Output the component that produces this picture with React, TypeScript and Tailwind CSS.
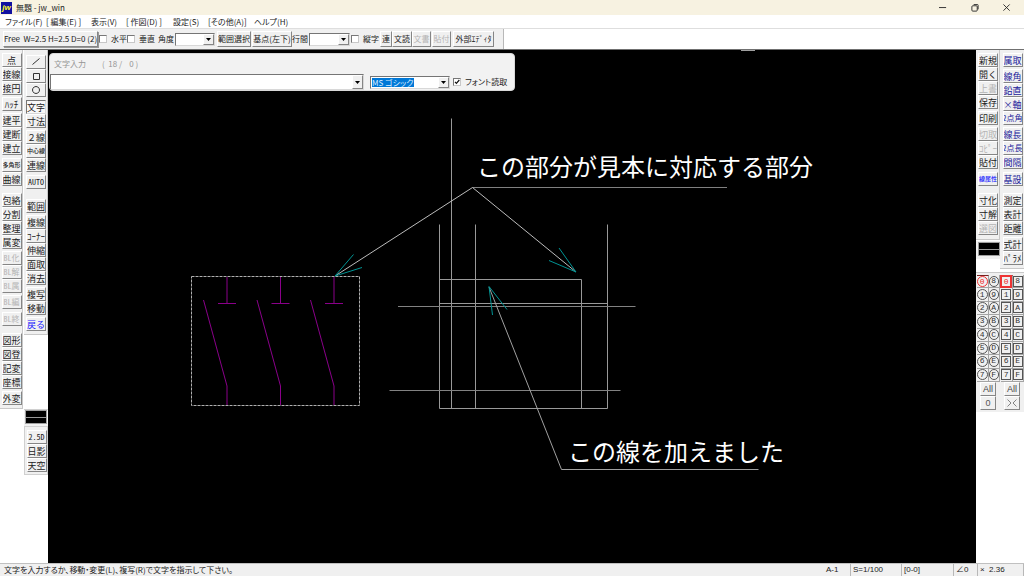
import React from "react";

type Tool = { t: string; gap?: string; tone?: "off" | "blue" | "navy"; pressed?: boolean; small?: boolean; latin?: boolean; shape?: string };

const colA: Tool[] = [
  { t: "点" }, { t: "接線" }, { t: "接円" },
  { t: "ﾊｯﾁ", gap: "mt-[2px]" },
  { t: "建平", gap: "mt-[2px]" }, { t: "建断" }, { t: "建立" },
  { t: "多角形", gap: "mt-[3px]", small: true }, { t: "曲線" },
  { t: "包絡", gap: "mt-[7px]" }, { t: "分割" }, { t: "整理" }, { t: "属変" },
  { t: "BL化", gap: "mt-[2px]", tone: "off", latin: true }, { t: "BL解", tone: "off", latin: true }, { t: "BL属", tone: "off", latin: true },
  { t: "BL編", gap: "mt-[2px]", tone: "off", latin: true },
  { t: "BL終", gap: "mt-[3px]", tone: "off", latin: true },
  { t: "図形", gap: "mt-[7px]" }, { t: "図登" }, { t: "記変" }, { t: "座標" },
  { t: "外変", gap: "mt-[2px]" },
];
const colB: Tool[] = [
  { t: "線", shape: "M1.5 7.5 8.5 1.5" }, { t: "矩形", shape: "M2.5 2.5h6v6h-6z" }, { t: "円", shape: "M5 1.5a3.5 3.5 0 1 0 .01 0z" },
  { t: "文字", gap: "mt-[3px]", pressed: true }, { t: "寸法" },
  { t: "２線", gap: "mt-[2px]" }, { t: "中心線", small: true }, { t: "連線" },
  { t: "AUTO", gap: "mt-[3px]", latin: true },
  { t: "範囲", gap: "mt-[10px]" },
  { t: "複線", gap: "mt-[2px]" }, { t: "ｺｰﾅｰ" }, { t: "伸縮" }, { t: "面取" }, { t: "消去" },
  { t: "複写", gap: "mt-[2px]" }, { t: "移動" },
  { t: "戻る", gap: "mt-[2px]", tone: "blue" },
];
const colB2: Tool[] = [{ t: "2.5D", latin: true }, { t: "日影" }, { t: "天空" }];
const colC: Tool[] = [
  { t: "新規" }, { t: "開く" }, { t: "上書", tone: "off" }, { t: "保存" },
  { t: "印刷", gap: "mt-[2px]" },
  { t: "切取", gap: "mt-[2px]", tone: "off" }, { t: "ｺﾋﾟｰ", tone: "off" }, { t: "貼付" },
  { t: "線属性", gap: "mt-[3px]", tone: "blue", small: true },
  { t: "寸化", gap: "mt-[7px]" }, { t: "寸解" }, { t: "選図", tone: "off" },
];
const colD: Tool[] = [
  { t: "属取", tone: "navy" },
  { t: "線角", gap: "mt-[2px]", tone: "navy" }, { t: "鉛直", tone: "navy" }, { t: "×軸", tone: "navy" }, { t: "2点角", tone: "navy", latin: true },
  { t: "線長", gap: "mt-[2px]", tone: "navy" }, { t: "2点長", tone: "navy", latin: true }, { t: "間隔", tone: "navy" },
  { t: "基設", gap: "mt-[3px]", tone: "navy" },
  { t: "測定", gap: "mt-[7px]" }, { t: "表計" }, { t: "距離" },
  { t: "式計", gap: "mt-[2px]" }, { t: "ﾊﾟﾗﾒ" },
];

const tones = { off: "text-[#b4b4b4]", blue: "text-[#1414ff]", navy: "text-[#20209a]", normal: "text-[#222222]" };
const raised = "border border-t-white border-l-white border-r-[#858585] border-b-[#858585] bg-[#f0f0f0]";
const sunken = "border border-t-[#757575] border-l-[#757575] border-r-[#d8d8d8] border-b-[#d8d8d8]";

function textSize(b: Tool) {
  if (b.small) return "text-[6px] font-medium";
  if (b.latin) return "text-[8px] [font-feature-settings:'hwid']";
  return "text-[9px]";
}

function ToolColumn({ items }: { items: Tool[] }) {
  return (
    <div className="flex flex-col items-center pl-px">
      {items.map((b) => (
        <button
          key={b.t}
          aria-label={b.t}
          className={`flex h-[14px] w-[20px] shrink-0 items-center justify-center overflow-hidden whitespace-nowrap ${textSize(b)} leading-none ${b.gap ?? ""} ${b.pressed ? `${sunken} bg-[#f8f8f8]` : raised} ${tones[b.tone ?? "normal"]}`}
        >
          {b.shape ? (
            <svg viewBox="0 0 10 10" className="h-[10px] w-[10px]" fill="none" stroke="#333"><path d={b.shape} /></svg>
          ) : b.t}
        </button>
      ))}
    </div>
  );
}

function LinePreview() {
  return (
    <button aria-label="線属性" className="flex h-[14px] w-[22px] shrink-0 items-center border border-[#a0a0a0] bg-black">
      <span className="h-px w-full bg-[#9a9a9a]" />
    </button>
  );
}

function Arrow({ label }: { label: string }) {
  return (
    <button aria-label={label} className={`flex w-[11px] shrink-0 items-center justify-center ${raised}`}>
      <svg viewBox="0 0 5 3" className="h-[3px] w-[5px]"><path d="M0 0h5L2.5 3z" fill="#000" /></svg>
    </button>
  );
}

function Combo({ label, className }: { label: string; className: string }) {
  return (
    <div className={`flex h-[13px] shrink-0 bg-white ${sunken} ${className}`}>
      <input aria-label={label} className="w-0 min-w-0 flex-1 bg-white outline-none" />
      <Arrow label={`${label} 一覧`} />
    </div>
  );
}

function Check({ label, className, checked }: { label: string; className: string; checked?: boolean }) {
  return (
    <label className={`flex shrink-0 items-center gap-1 whitespace-nowrap ${className}`}>
      <span className="relative flex h-[8px] w-[8px] shrink-0">
        <input type="checkbox" defaultChecked={checked} className="peer h-[8px] w-[8px] appearance-none border border-[#c8c8c8] border-t-[#777777] border-l-[#777777] bg-white" />
        <svg viewBox="0 0 8 8" className="pointer-events-none absolute inset-0 hidden h-[8px] w-[8px] peer-checked:block">
          <path d="M2 3.8 3.4 5.4 6.3 2" fill="none" stroke="#111" strokeWidth="1.2" />
        </svg>
      </span>
      {label}
    </label>
  );
}

function BarButton({ children, className, off }: { children: React.ReactNode; className: string; off?: boolean }) {
  return (
    <button className={`flex h-[16px] shrink-0 items-center justify-center overflow-hidden whitespace-nowrap ${raised} ${off ? tones.off : ""} ${className}`}>
      {children}
    </button>
  );
}

const menus = [
  ["ファイル(F)", "w-[41px]"], ["[ 編集(E) ]", "w-[45px]"], ["表示(V)", "w-[35px]"], ["[ 作図(D) ]", "w-[47px]"],
  ["設定(S)", "w-[35px]"], ["[その他(A)]", "w-[46px]"], ["ヘルプ(H)", "w-[40px]"],
];

const layersLeft = ["0", "1", "2", "3", "4", "5", "6", "7"];
const layersRight = ["8", "9", "A", "B", "C", "D", "E", "F"];

function Layers({ round }: { round?: boolean }) {
  return (
    <div className="flex flex-col items-center border-t border-[#c8c8c8] bg-[#f0f0f0] pt-[2px] pb-[2px]">
      <div className="grid h-[107px] w-full grid-cols-2 grid-rows-8 pl-px">
        {layersLeft.map((l, i) => (
          <React.Fragment key={l}>
            {[l, layersRight[i]].map((n) => (
              <button
                key={n}
                aria-label={`レイヤ ${n}`}
                className={`flex min-h-0 items-center justify-center border-r border-b border-[#a4a4a4] font-['Liberation_Mono',monospace] text-[8px] leading-none ${n === "0" ? "border-t border-t-[#7a2020] text-[#ee2222]" : "text-[#333333]"}`}
              >
                <span
                  className={`flex items-center justify-center border ${round ? "h-[11px] w-[11px] rounded-full" : "h-[11px] w-[10px]"} ${n === "0" ? "border-[#ee3333]" : "border-[#555555]"} ${n === "0" && !round ? "shadow-[0_0_0_1px_#ee3333]" : ""}`}
                >
                  {n}
                </span>
              </button>
            ))}
          </React.Fragment>
        ))}
      </div>
      <button className={`flex h-[14px] w-[16px] items-center justify-center font-['Liberation_Sans',sans-serif] text-[9px] leading-none text-[#444444] ${raised}`}>All</button>
      <button aria-label={round ? "0" : "切替"} className={`flex h-[14px] w-[16px] items-center justify-center font-['Liberation_Sans',sans-serif] text-[9px] leading-none text-[#555555] ${raised}`}>
        {round ? "0" : (
          <svg viewBox="0 0 10 8" className="h-[8px] w-[10px]" fill="none" stroke="#666" strokeWidth="0.8"><path d="M0.5 0.5 4 4 0.5 7.5M9.5 0.5 6 4 9.5 7.5" /></svg>
        )}
      </button>
    </div>
  );
}

function Drawing() {
  return (
    <svg className="absolute inset-0 h-full w-full" aria-label="図面">
      <g transform="translate(-48 -50)" fill="none" strokeWidth="1">
        <path d="M741 50.5h14" stroke="#a0a0a0" />
        <rect x="191.5" y="276.5" width="168" height="129" stroke="#b0b0b0" strokeDasharray="3 1" />
        {[0, 53.5, 107].map((x) => (
          <path key={x} transform={`translate(${x} 0)`} d="M227 277v26.5M218 303.5h18M203.5 300 227 386V405" stroke="#8a008a" />
        ))}
        <g stroke="#999999">
          <path d="M451.5 118.5V408.5M475.5 224.5V408.5M439.5 224.5V408.5H607.5V224.5M439.5 279.5H581.5V408.5" />
          <path d="M439 303.5H607.5" />
          <path d="M398 306.5H635.5M389.5 390.5H620.5" stroke="#828282" />
        </g>
        <path d="M727 187.5H472.5" stroke="#808080" />
        <path d="M335 276 472.5 187.5 576 272" stroke="#bcbcbc" />
        <path d="M489 287 561.5 469.5H758.5" stroke="#a0a0a0" />
        <path d="M353.5 254.5 335 276 362 267.5M559 248 576 272 549 260.5M507 309.5 489 286.5 492.5 315" stroke="#009494" />
        <g fill="#ffffff" fontFamily="'Noto Sans CJK JP', sans-serif" fontSize="24">
          <text x="477" y="176">この部分が見本に対応する部分</text>
          <text x="568" y="461">この線を加えました</text>
        </g>
      </g>
    </svg>
  );
}

export default function App() {
  return (
    <div className="flex min-h-screen flex-col overflow-hidden bg-white font-['Noto_Sans_CJK_JP',sans-serif] text-[8px] leading-none text-[#222222]">
      <header className="flex h-[15px] items-center bg-[#f7f2e1] pl-px">
        <span className="flex h-[12px] w-[11px] items-center justify-center bg-[#1010a0] font-['Liberation_Sans',sans-serif] text-[8px] font-bold italic text-[#ffff20]">jw</span>
        <h1 className="ml-1 flex-1 text-[8px]">無題 - jw_win</h1>
        <div className="flex items-center gap-[24px] pr-[13px]">
          {[
            ["最小化", "M0 4h8"],
            ["元に戻す", "M1 3q0-1 1-1h4q1 0 1 1v4q0 1-1 1H2q-1 0-1-1zM3 0.5h4q1 0 1 1V6"],
            ["閉じる", "M0.5 0.5 7.5 7.5M7.5 0.5 0.5 7.5"],
          ].map(([label, d]) => (
            <button key={label} aria-label={label}>
              <svg viewBox="0 0 9 9" className="h-[8px] w-[8px]" fill="none" stroke="#222"><path d={d} /></svg>
            </button>
          ))}
        </div>
      </header>
      <nav className="flex h-[14px] items-center border-b border-[#dedede] bg-white pl-[5px] [font-feature-settings:'palt']">
        {menus.map(([m, w]) => (
          <button key={m} className={`text-left whitespace-nowrap ${w}`}>{m}</button>
        ))}
      </nav>
      <div className="flex h-[21px] border-b border-[#707070] bg-white">
        <div className="flex w-[504px] shrink-0 items-center border-r border-[#b8b8b8] bg-[#f0f0f0] pl-[3px]">
          <BarButton className="w-[95px] border-[#777777] whitespace-pre shadow-[1px_1px_0_#999999]">{"Free  W=2.5 H=2.5 D=0 (2)"}</BarButton>
          <Check label="水平" className="ml-[1px] w-[28px]" />
          <Check label="垂直" className="w-[31px]" />
          <span className="w-[17px]">角度</span>
          <Combo label="角度" className="w-[40px]" />
          <BarButton className="ml-[2px] w-[34px]">範囲選択</BarButton>
          <BarButton className="ml-px w-[40px] [font-feature-settings:'palt']">基点(左下)</BarButton>
          <span className="w-[17px]">行間</span>
          <Combo label="行間" className="w-[41px]" />
          <Check label="縦字" className="ml-px w-[29px]" />
          <BarButton className="w-[12px]">連</BarButton>
          <BarButton className="w-[20px]">文読</BarButton>
          <BarButton className="w-[19px]" off>文書</BarButton>
          <BarButton className="ml-px w-[19px]" off>貼付</BarButton>
          <BarButton className="ml-[2px] w-[41px]">外部ｴﾃﾞｨﾀ</BarButton>
        </div>
      </div>
      <main className="flex flex-1">
        <aside className="flex w-[48px] shrink-0 items-start gap-px bg-white">
          <div className="w-[23px] border-r border-b border-[#c8c8c8] bg-[#f0f0f0] pt-[3px] pb-[3px]">
            <ToolColumn items={colA} />
          </div>
          <div className="flex w-[24px] flex-col">
            <div className="border-r border-b border-[#c8c8c8] bg-[#f0f0f0] pt-[5px] pb-[3px]">
              <ToolColumn items={colB} />
            </div>
            <div className="mt-[74px] flex justify-center border-t border-[#d0d0d0] bg-[#f0f0f0] pb-[2px]">
              <LinePreview />
            </div>
            <div className="border border-[#d0d0d0] bg-[#f0f0f0] pt-[3px] pb-[2px]">
              <ToolColumn items={colB2} />
            </div>
          </div>
        </aside>
        <section className="relative min-w-0 flex-1 overflow-hidden bg-black">
          <Drawing />
          <div role="dialog" aria-label="文字入力" className="absolute top-[3px] left-px flex h-[38px] w-[466px] flex-col rounded-[4px] border border-[#d8d8d8] bg-[#f2f2f2]">
            <h2 className="flex h-[20px] items-center gap-[16px] pl-1 text-[8px] whitespace-pre text-[#959595]">
              <span>文字入力</span><span>{"(  18 /    0 )"}</span>
            </h2>
            <div className="flex items-center">
              <div className={`flex h-[16px] w-[314px] bg-white ${sunken}`}>
                <input aria-label="文字入力" className="min-w-0 flex-1 bg-white outline-none" />
                <Arrow label="文字履歴" />
              </div>
              <div className={`ml-[6px] flex h-[13px] w-[80px] items-stretch justify-between bg-white pl-px ${sunken}`}>
                <input aria-label="フォント" defaultValue="MS ゴシック" className="my-px w-[42px] bg-[#0078d7] text-[8px] leading-none text-[#d8ecff] outline-none [font-feature-settings:'palt']" />
                <Arrow label="フォント一覧" />
              </div>
              <Check label="フォント読取" className="ml-[3px] [font-feature-settings:'palt']" checked />
            </div>
          </div>
        </section>
        <aside className="flex w-[48px] shrink-0 items-start bg-white">
          <div className="w-[24px]">
            <div className="h-[190px] border-r border-b border-[#c8c8c8] bg-[#f0f0f0] pt-[3px]">
              <ToolColumn items={colC} />
            </div>
            <div className="mt-[1px] flex h-[18px] items-start justify-center bg-[#f0f0f0] pt-px pl-px"><LinePreview /></div>
            <div className="mt-[13px]"><Layers round /></div>
          </div>
          <div className="w-[24px]">
            <div className="h-[219px] border-b border-[#c8c8c8] bg-[#f0f0f0] pt-[3px]">
              <ToolColumn items={colD} />
            </div>
            <div className="mt-[3px]"><Layers /></div>
          </div>
        </aside>
      </main>
      <footer className="flex h-[13px] items-center border-t border-[#c0c0c0] bg-[#f0f0f0] pl-[4px]">
        <p className="flex-1 [font-feature-settings:'palt']">文字を入力するか、移動・変更(L)、複写(R)で文字を指示して下さい。</p>
        <div className="flex h-full font-['Liberation_Sans','Noto_Sans_CJK_JP',sans-serif]">
          {[["A-1", "w-[27px]"], ["S=1/100", "w-[51px]"], ["[0-0]", "w-[52px]"], ["∠0", "w-[24px]"], ["×  2.36", "w-[46px]"]].map(([t, w]) => (
            <span key={t} className={`flex items-center border-r border-[#b8b8b8] pl-[2px] whitespace-pre ${w}`}>{t}</span>
          ))}
        </div>
      </footer>
    </div>
  );
}
